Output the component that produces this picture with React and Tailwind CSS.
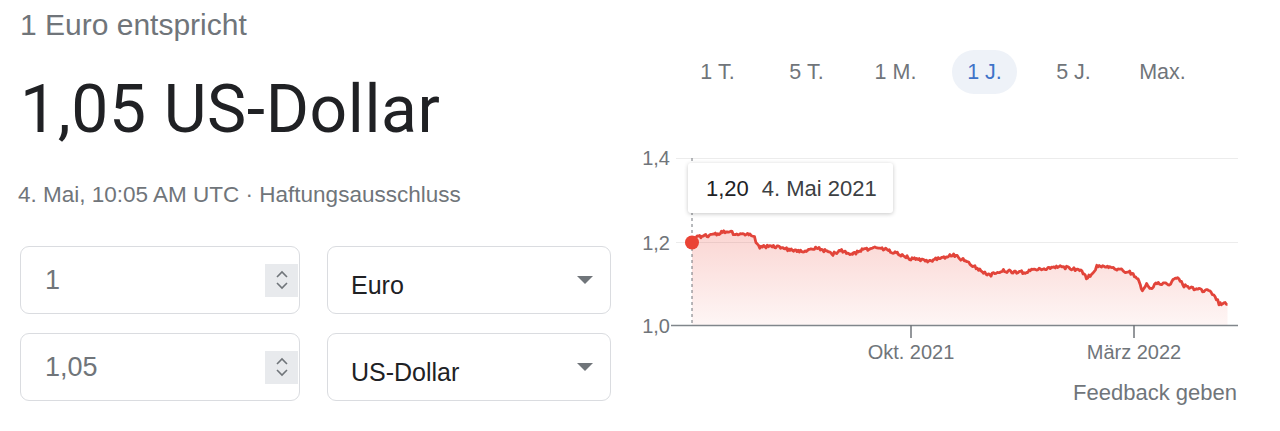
import React from "react";

// key points of the 1-year EUR/USD curve, in page pixels
const KEYS = [
  [692, 242.5], [696, 236.7], [713, 235], [725, 231.7], [738, 234], [750, 235],
  [754.5, 238], [758.6, 246.7], [771, 246], [787.7, 249.3], [804, 251],
  [816.7, 248.3], [825, 250.7], [833, 254], [841.6, 250.7], [850, 255],
  [862, 250], [874.8, 247.7], [887, 250], [899.7, 254], [912, 259],
  [928.8, 260.7], [945, 257.3], [953.6, 255], [962, 259.3], [970, 263.3],
  [978.5, 270], [991, 275], [1003.4, 270.7], [1024, 272.3], [1036.6, 269.3],
  [1049, 268.3], [1061.5, 266.7], [1074, 269.3], [1082, 271.7], [1086.4, 278.3],
  [1092.7, 273.3], [1096.8, 266], [1111, 267.3], [1123.8, 270.7], [1132, 273.3],
  [1138, 280], [1142.4, 290], [1146.6, 284], [1150.8, 289.3], [1157, 282.7],
  [1169.4, 284], [1177.7, 276.7], [1184, 286], [1194, 288.3], [1202.6, 290.7],
  [1211, 291.7], [1215, 296.7], [1219, 303.3], [1227.5, 304.3],
];

function rand(seed) {
  let s = seed;
  return () => {
    s = (s * 16807) % 2147483647;
    return (s - 1) / 2147483646;
  };
}

function buildLine() {
  const r = rand(42);
  const pts = [[KEYS[0][0], KEYS[0][1]]];
  for (let i = 1; i < KEYS.length; i++) {
    const [x0, y0] = KEYS[i - 1];
    const [x1, y1] = KEYS[i];
    const steps = Math.max(1, Math.round((x1 - x0) / 1.2));
    for (let s = 1; s <= steps; s++) {
      const t = s / steps;
      const jitter = i === KEYS.length - 1 && s === steps ? 0 : (r() - 0.5) * 3.2;
      pts.push([x0 + (x1 - x0) * t, y0 + (y1 - y0) * t + jitter]);
    }
  }
  return pts;
}

const LINE = buildLine();
const linePath = LINE.map(([x, y], i) => `${i ? "L" : "M"}${x.toFixed(1)} ${y.toFixed(1)}`).join(" ");
const areaPath = `${linePath} L1227.5 325 L692 325 Z`;

const TABS = ["1 T.", "5 T.", "1 M.", "1 J.", "5 J.", "Max."];

function Spinner() {
  return (
    <div className="ml-auto mr-[1px] w-[33px] h-[33px] bg-[#e8eaed] flex items-center justify-center">
      <svg width="14" height="22" viewBox="0 0 14 22">
        <polyline points="2,8 7,3 12,8" fill="none" stroke="#70757a" strokeWidth="1.6" />
        <polyline points="2,14 7,19 12,14" fill="none" stroke="#70757a" strokeWidth="1.6" />
      </svg>
    </div>
  );
}

function Caret() {
  return (
    <svg className="ml-auto mr-[17px]" width="16" height="8" viewBox="0 0 16 8">
      <polygon points="0,0 16,0 8,8" fill="#70757a" />
    </svg>
  );
}

function AmountBox({ value }) {
  return (
    <div className="h-[68px] border border-[#dadce0] rounded-[9px] flex items-center pl-[24px]">
      <span className="text-[27px] text-[#70757a] leading-none">{value}</span>
      <Spinner />
    </div>
  );
}

function CurrencyBox({ label }) {
  return (
    <div className="h-[68px] border border-[#dadce0] rounded-[9px] flex items-center pl-[23px]">
      <span className="text-[25px] text-[#202124] leading-none pt-[10px]">{label}</span>
      <Caret />
    </div>
  );
}

function Chart() {
  return (
    <div className="relative w-[620px] h-[225px]">
      <svg width="620" height="225" viewBox="630 140 620 225" fontFamily="Liberation Sans, Arial, sans-serif">
        <defs>
          <linearGradient id="fill" x1="0" y1="232" x2="0" y2="325" gradientUnits="userSpaceOnUse">
            <stop offset="0" stopColor="#ea4335" stopOpacity="0.22" />
            <stop offset="1" stopColor="#ea4335" stopOpacity="0.05" />
          </linearGradient>
        </defs>

        <line x1="676" y1="158.5" x2="1238" y2="158.5" stroke="#ececec" strokeWidth="1" />
        <line x1="676" y1="242.5" x2="1238" y2="242.5" stroke="#ececec" strokeWidth="1" />

        <text x="670" y="165" textAnchor="end" fontSize="20" fill="#70757a">1,4</text>
        <text x="670" y="250" textAnchor="end" fontSize="20" fill="#70757a">1,2</text>
        <text x="670" y="333" textAnchor="end" fontSize="20" fill="#70757a">1,0</text>

        <path d={areaPath} fill="url(#fill)" />
        <line x1="692" y1="158" x2="692" y2="325" stroke="#70757a" strokeWidth="1" strokeDasharray="3 3" />
        <path d={linePath} fill="none" stroke="#e2443a" strokeWidth="2.8" strokeLinejoin="round" />

        <line x1="671" y1="325.5" x2="1238" y2="325.5" stroke="#80868b" strokeWidth="1.5" />
        <line x1="911" y1="325" x2="911" y2="338" stroke="#70757a" strokeWidth="1.5" />
        <line x1="1134" y1="325" x2="1134" y2="338" stroke="#70757a" strokeWidth="1.5" />

        <circle cx="692" cy="242.5" r="7" fill="#ea4335" />

        <text x="911" y="359" textAnchor="middle" fontSize="20" fill="#70757a">Okt. 2021</text>
        <text x="1134" y="359" textAnchor="middle" fontSize="20" fill="#70757a">März 2022</text>
      </svg>

      {/* hover tooltip */}
      <div className="absolute left-[58px] top-[23px] w-[205px] h-[50px] bg-white rounded-[3px] shadow-[0_1px_4px_rgba(0,0,0,0.22)] flex items-center pl-[18px] gap-[13px] text-[22px]">
        <span className="text-[#202124]">1,20</span>
        <span className="text-[#3c4043]">4. Mai 2021</span>
      </div>
    </div>
  );
}

export default function App() {
  return (
    <div className="w-[1280px] h-[431px] bg-white flex overflow-hidden font-['Liberation_Sans',Arial,sans-serif]">
      {/* converter */}
      <div className="w-[630px] pl-[20px]">
        <p className="pt-[9px] text-[30px] leading-[32px] text-[#70757a]">1 Euro entspricht</p>
        <p className="mt-[36px] text-[66px] leading-[66px] tracking-[0.6px] text-[#202124] font-['Roboto',sans-serif]">
          1,05 US-Dollar
        </p>
        <p className="mt-[39px] -ml-[2px] text-[22.5px] leading-[26px] text-[#70757a]">
          4. Mai, 10:05 AM UTC · Haftungsausschluss
        </p>
        <div className="mt-[38px] grid grid-cols-[280px_284px] gap-x-[27px] gap-y-[19px]">
          <AmountBox value="1" />
          <CurrencyBox label="Euro" />
          <AmountBox value="1,05" />
          <CurrencyBox label="US-Dollar" />
        </div>
      </div>

      {/* history chart */}
      <div className="w-[650px] flex flex-col">
        <div className="mt-[50px] pl-[43px] flex text-[21.5px] text-[#70757a]">
          {TABS.map((t) => (
            <div key={t} className="w-[89px] flex justify-center">
              <span
                className={
                  t === "1 J."
                    ? "h-[44px] px-[15px] rounded-full flex items-center bg-[#eef2f8] text-[#3e73c8]"
                    : "h-[44px] px-[15px] rounded-full flex items-center"
                }
              >
                {t}
              </span>
            </div>
          ))}
        </div>
        <div className="mt-[46px]">
          <Chart />
        </div>
        <p className="mt-[15px] pr-[43px] text-right text-[22px] leading-[26px] text-[#70757a]">Feedback geben</p>
      </div>
    </div>
  );
}
